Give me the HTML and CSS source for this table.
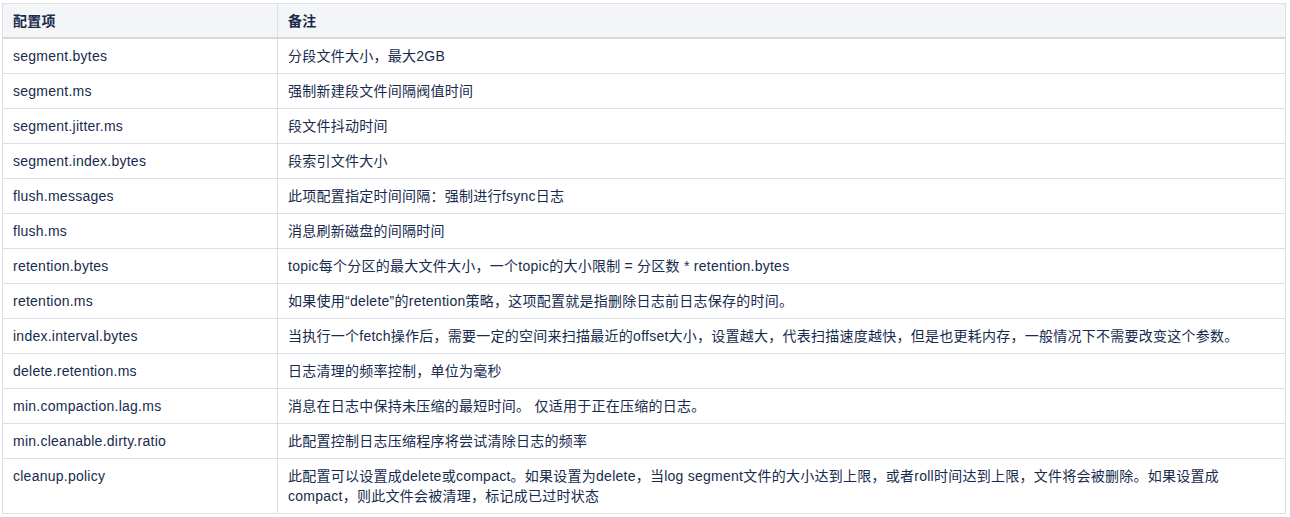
FILE: index.html
```html
<!DOCTYPE html>
<html lang="zh">
<head>
<meta charset="utf-8">
<link rel="stylesheet" href="styles.css">
</head>
<body>
<div class="wrap">
<table class="cfg">
<thead>
<tr><th class="c1">配置项</th><th>备注</th></tr>
</thead>
<tbody>
<tr><td>segment.bytes</td><td>分段文件大小，最大2GB</td></tr>
<tr><td>segment.ms</td><td>强制新建段文件间隔阀值时间</td></tr>
<tr><td>segment.jitter.ms</td><td>段文件抖动时间</td></tr>
<tr><td>segment.index.bytes</td><td>段索引文件大小</td></tr>
<tr><td>flush.messages</td><td>此项配置指定时间间隔：强制进行fsync日志</td></tr>
<tr><td>flush.ms</td><td>消息刷新磁盘的间隔时间</td></tr>
<tr><td>retention.bytes</td><td>topic每个分区的最大文件大小，一个topic的大小限制 = 分区数 * retention.bytes</td></tr>
<tr><td>retention.ms</td><td>如果使用“delete”的retention策略，这项配置就是指删除日志前日志保存的时间。</td></tr>
<tr><td>index.interval.bytes</td><td>当执行一个fetch操作后，需要一定的空间来扫描最近的offset大小，设置越大，代表扫描速度越快，但是也更耗内存，一般情况下不需要改变这个参数。</td></tr>
<tr><td>delete.retention.ms</td><td>日志清理的频率控制，单位为毫秒</td></tr>
<tr><td>min.compaction.lag.ms</td><td>消息在日志中保持未压缩的最短时间。 仅适用于正在压缩的日志。</td></tr>
<tr><td>min.cleanable.dirty.ratio</td><td>此配置控制日志压缩程序将尝试清除日志的频率</td></tr>
<tr><td>cleanup.policy</td><td>此配置可以设置成delete或compact。如果设置为delete，当log segment文件的大小达到上限，或者roll时间达到上限，文件将会被删除。如果设置成<br>compact，则此文件会被清理，标记成已过时状态</td></tr>
</tbody>
</table>
</div>
</body>
</html>
```
FILE: styles.css
```css
html, body {
  margin: 0;
  padding: 0;
  background: #ffffff;
}
.wrap {
  padding: 3px 0 0 2px;
  width: 1284px;
}
.cfg {
  width: 100%;
  border-collapse: collapse;
  font-family: "Liberation Sans", Arial, "Noto Sans CJK SC", sans-serif;
  font-size: 14px;
  line-height: 20px;
  letter-spacing: 0.25px;
  color: #172b4d;
  table-layout: fixed;
}
.cfg th, .cfg td {
  border: 1px solid #dcdfe4;
  padding: 7px 10px;
  text-align: left;
  vertical-align: top;
}
.cfg th {
  background: #f4f5f7;
  font-weight: bold;
  border-bottom: 2px solid #d5d8dd;
  padding: 7px 10px 6px;
}
.cfg .c1 {
  width: 254px;
}
```
